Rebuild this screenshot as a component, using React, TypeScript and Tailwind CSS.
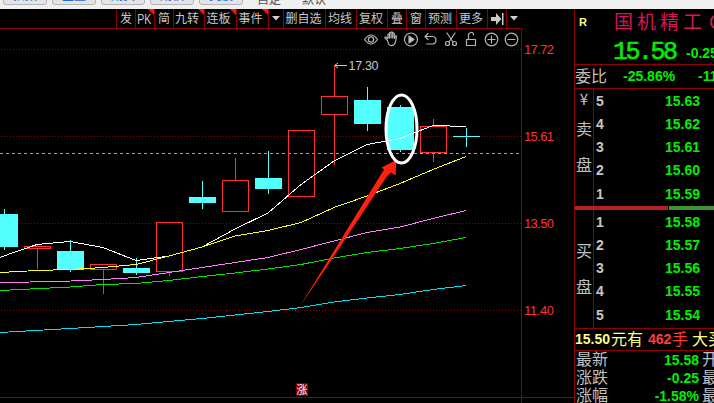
import React from 'react';

const CJK = "font-['Liberation_Sans','Noto_Sans_CJK_SC',sans-serif]";

const topTabs = ['指数', '主盘', '期货', '期权', '美股'];

type Cell = { label: string; w: string; flag?: boolean };
const cells: Cell[] = [
  { label: '发', w: 'w-[19px]' },
  { label: 'PK', w: 'w-[19px]', flag: true },
  { label: '简', w: 'w-[19px]' },
  { label: '九转', w: 'w-[31px]', flag: true },
  { label: '连板', w: 'w-[32px]', flag: true },
  { label: '事件', w: 'w-[32px]', flag: true },
  { label: 'v', w: 'w-[15px]' },
  { label: '删自选', w: 'w-[42px]' },
  { label: '均线', w: 'w-[31px]' },
  { label: '复权', w: 'w-[31px]' },
  { label: '叠', w: 'w-[19px]' },
  { label: '窗', w: 'w-[19px]' },
  { label: '预测', w: 'w-[31px]' },
  { label: '更多', w: 'w-[31px]' },
  { label: '>', w: 'w-[19px]' },
  { label: 'v', w: 'w-[15px]' },
];

function TopBar() {
  return (
    <div className="flex h-[9px] shrink-0 items-end overflow-hidden bg-[#f0f0f0] text-[12px]">
      <div className="flex items-end gap-[5px] pb-1 pl-[3px]">
        {topTabs.map((t) => (
          <div key={t} className="flex h-[24px] w-[44px] shrink-0 items-end justify-center rounded-[3px] border border-[#b4b4b4] bg-[#e4e4e6] leading-[16px] text-[#1f6fd0]">
            <span>{t}</span>
          </div>
        ))}
      </div>
      <div className="flex items-end gap-[21px] pb-px pl-[14px] leading-[16px] text-[#555]">
        <span>自定</span>
        <span>默认</span>
      </div>
    </div>
  );
}

function Toolbar() {
  return (
    <div className="flex h-[20px] w-[521px] justify-end border-b border-[#900000]">
      {cells.map((c, i) => (
        <div key={i} className={`relative flex shrink-0 items-center justify-center border-l border-[#900000] text-[12px] leading-none text-[#c8c8c8] ${c.w}`}>
          {c.label === 'v' ? (
            <svg width="8" height="5" viewBox="0 0 8 5"><path d="M0 0h8L4 4.5z" fill="#d0d0d0" /></svg>
          ) : c.label === '>' ? (
            <svg width="13" height="12" viewBox="0 0 13 12"><path d="M0 4h5V0l5.500 6L5 12V8H0zM11 0h1.500v12H11z" fill="#c8c8c8" /></svg>
          ) : (
            <span className={c.flag && c.label !== 'PK' ? 'whitespace-nowrap pr-1' : c.label.length > 1 ? 'whitespace-nowrap pr-0.5' : 'whitespace-nowrap'}>
              {c.label === 'PK' ? <span className="inline-block origin-center scale-x-75 text-[14px]">PK</span> : c.label}
            </span>
          )}
          {c.flag && (
            <svg className="absolute right-0 top-0" width="6" height="6" viewBox="0 0 6 6"><path d="M0 0h6v6z" fill="#ff1414" /></svg>
          )}
        </div>
      ))}
    </div>
  );
}

function DrawingTools() {
  return (
    <g fill="none" stroke="#b4b4b4" strokeWidth="1.2" strokeLinecap="round" strokeLinejoin="round">
      <path d="M364.500 39.500q6.500-9 13 0q-6.500 9-13 0z" />
      <circle cx="371" cy="39.500" r="2.600" />
      <path d="M387.500 40.500l-2.300-2.200q-.8-1.200.8-1.300l2 1.500v-4q.7-1.500 1.500 0v3.500v-5q.8-1.300 1.600 0v5v-5.500q.8-1.200 1.600 0v5.500v-4.500q.8-1.200 1.600 0v5l.7-2.300q1.400-1 1.500.5l-1 5q-.8 4-4.500 4q-2.500-.2-3.500-5.200z" />
      <circle cx="411" cy="39.500" r="6.500" />
      <path d="M409 36v7l5-3.500z" fill="#c8c8c8" />
      <path d="M428 33.500l-3 3l3 3M425.500 36.500h7q3.500.3 3.500 3.800t-3.500 3.700h-6" />
      <path d="M447 33l6 9M455 33l-6 9" />
      <circle cx="447.500" cy="43.500" r="2" /><circle cx="454.500" cy="43.500" r="2" />
      <path d="M466.500 39.500h9v6h-9zM468.500 39v-4q0-2 2.500-2.500t2.500 2.500" />
      <circle cx="491.500" cy="39.500" r="6.300" /><path d="M488 39.500h7M491.500 36v7" />
      <circle cx="511.500" cy="39.500" r="6.300" /><path d="M508 39.500h7" />
    </g>
  );
}

/* Candles: centre x, wick top, wick bottom, body top, body bottom, rising */
const candles: [number, number, number, number, number, boolean][] = [
  [4, 209, 250, 214, 247, false],
  [37, 245, 269, 246, 249, true],
  [70, 240, 272, 251, 270, false],
  [103, 264, 294, 264, 270, true],
  [136, 258, 275, 268, 273, false],
  [169, 222, 276, 222, 272, true],
  [202, 181, 209, 197, 203, false],
  [235, 158, 212, 180, 212, true],
  [268, 151, 194, 178, 189, false],
  [301, 130, 197, 130, 197, true],
  [334, 66, 165, 96, 115, true],
  [367, 87, 131, 100, 124, false],
  [400, 105, 152, 107, 150, false],
  [433, 119, 162, 126, 153, true],
];

const averages: [string, string][] = [
  ['#ffffff', '0,257.500 12,253 37,244.500 70,241.500 103,247.500 136,260.500 169,256 202,247 235,229 268,213 301,184.500 334,161 367,144.500 400,138.500 433,125.500 466,126.500'],
  ['#ffff20', '0,272.500 37,270.500 70,269.500 103,267.500 136,264.500 169,256 202,247 235,236 268,230.500 301,222.500 334,207.500 367,196 400,183.500 433,169.500 466,156.500'],
  ['#ff80ff', '0,282.500 60,281.500 103,279.500 136,277.500 169,272.500 202,267.500 235,262.500 268,257.500 301,249.500 334,241 367,232.500 400,227 433,218.500 466,210.500'],
  ['#00e600', '0,290.500 70,287 103,284.500 136,283.500 169,280.500 202,276.500 235,273 268,269 301,264.500 334,258 367,252.500 400,248.500 433,243.500 466,237.500'],
  ['#00e0f0', '0,332.500 70,328.500 136,324.500 169,321.500 202,318.500 235,315 268,311.500 301,307.500 334,302 367,298 400,294.500 433,289.500 466,285.500'],
];

function Chart() {
  return (
    <svg className="block shrink-0" width="574" height="374" viewBox="0 29 574 374">
      <g fontFamily="Liberation Sans, sans-serif" fontSize="13" fill="#ff3232">
        <text x="524" y="54" textLength="30">17.72</text>
        <text x="524" y="141" textLength="30">15.61</text>
        <text x="524" y="228" textLength="30">13.50</text>
        <text x="524" y="315" textLength="30">11.40</text>
      </g>
      <g stroke="#900000" shapeRendering="crispEdges">
        <path d="M1 49.500H521M1 136.500H521M1 223.500H521M1 310.500H521" strokeDasharray="1 2" />
        <path d="M521.500 29V403M0 397.500H574" />
      </g>
      <path d="M0 153.500H519" stroke="#ff8c32" strokeDasharray="3 3" shapeRendering="crispEdges" />
      <g shapeRendering="crispEdges">
        {candles.map(([x, t, b, o, c, up]) =>
          up ? (
            <path key={x} d={`M${x + 0.5} ${t}V${o}M${x + 0.5} ${c}V${b}M${x - 12.5} ${o + 0.5}H${x + 13.5}V${c - 0.5}H${x - 12.5}Z`} fill="none" stroke="#ff3232" />
          ) : (
            <g key={x} fill="#54ffff">
              <rect x={x} y={t} width="1" height={b - t} />
              <rect x={x - 13} y={o} width="27" height={c - o} />
            </g>
          ),
        )}
        <path d="M453 136.500H480M466.500 128V147" stroke="#54ffff" />
      </g>
      {averages.map(([color, pts]) => (
        <polyline key={color} points={pts} fill="none" stroke={color} shapeRendering="crispEdges" />
      ))}
      <path d="M335 65.500H347M338 63L334.500 65.500L338 68" stroke="#c8c8c8" fill="none" />
      <text x="348.500" y="69.500" fontSize="12.500" textLength="30" fill="#c8c8c8" fontFamily="Liberation Sans, sans-serif">17.30</text>
      <path d="M299.500 307L384 169.500L381.500 167.500L396.500 160L395.500 175.500L391 172.500L386.500 177L331 260.500Z" fill="#ff2010" />
      <ellipse cx="401.500" cy="129" rx="15.500" ry="34" fill="none" stroke="#fff" strokeWidth="3" />
      <rect x="296" y="383" width="12" height="13" fill="#800000" />
      <text x="296.500" y="393.800" fontSize="11" fill="#fff" fontFamily="Noto Sans CJK SC, sans-serif">涨</text>
      <DrawingTools />
    </svg>
  );
}

function Depth({ title, rows }: { title: string[]; rows: [string, string][] }) {
  const sell = title.length === 3;
  return (
    <div className={`flex shrink-0 ${sell ? 'h-[117px]' : 'h-[118px]'}`}>
      <div className={`flex w-[19px] shrink-0 flex-col items-center border-r border-[#900000] text-[16px] leading-[16px] text-[#c0c0c0] ${sell ? 'pt-0.5' : 'pt-[34px]'}`}>
        {title.map((t, i) => (
          <span key={i} className={i === 0 ? (sell ? "font-['Noto_Sans_CJK_SC'] text-[15px]" : '') : i === 1 && sell ? 'mt-[15px]' : 'mt-[20px]'}>{t}</span>
        ))}
      </div>
      <div className="flex flex-1 flex-col">
        {rows.map(([n, p]) => (
          <div key={n} className="flex h-[23.250px] items-center justify-between pl-[2px] pr-[14px] text-[14px] font-bold leading-none">
            <span className="text-[#c8c8c8]">{n}</span>
            <span className="whitespace-nowrap text-right text-[#00f000]">{p}</span>
          </div>
        ))}
      </div>
    </div>
  );
}

function Quote() {
  return (
    <div className="flex w-[140px] shrink-0 flex-col overflow-hidden border-l border-[#900000]">
      <div className="flex h-[26px] shrink-0 whitespace-nowrap pl-1">
        <span className="mt-[7px] w-[35px] shrink-0 text-[11px] font-bold leading-[13px] text-[#ffff80]">R</span>
        <span className="mt-[1px] shrink-0 font-['Noto_Sans_CJK_SC',sans-serif] text-[19px] leading-[22px] tracking-[4px] text-[#d8145a]">国机精工</span>
        <span className="mt-[2px] shrink-0 pl-[3px] text-[20px] leading-[22px] text-[#d8145a]">C</span>
      </div>
      <div className="flex h-[30px] shrink-0 items-center whitespace-nowrap border-b border-[#900000] pl-[38px] text-[#00f000]">
        <span className="w-[73px] shrink-0 pt-[5px] font-['Liberation_Mono',monospace] text-[25px] leading-none tracking-[-2.500px] [-webkit-text-stroke:0.500px_#00f000]">15.58</span>
        <span className="shrink-0 pt-[7px] text-[14px] font-bold">-0.25</span>
      </div>
      <div className="flex h-[24px] shrink-0 items-center whitespace-nowrap border-b border-[#900000] text-[14px] font-bold text-[#00f000]">
        <span className="w-[48px] shrink-0 text-[16px] font-normal text-[#c0c0c0]">委比</span>
        <span className="w-[75px] shrink-0">-25.86%</span>
        <span className="shrink-0">-117</span>
      </div>
      <Depth title={['¥', '卖', '盘']} rows={[['5', '15.63'], ['4', '15.62'], ['3', '15.61'], ['2', '15.60'], ['1', '15.59']]} />
      <div className="flex h-1 shrink-0 gap-px">
        <div className="w-[93px] bg-[#b42020]" />
        <div className="flex-1 bg-[#3c9632]" />
      </div>
      <Depth title={['买', '盘']} rows={[['1', '15.58'], ['2', '15.57'], ['3', '15.56'], ['4', '15.55'], ['5', '15.54']]} />
      <div className="flex h-[23px] shrink-0 items-center whitespace-nowrap border-y border-[#900000] text-[14px] text-[#ffff80]">
        <span className="w-[36px] shrink-0 font-bold">15.50</span>
        <span className="w-[37px] shrink-0 text-[16px]">元有</span>
        <span className="w-[24px] shrink-0 font-bold text-[#ff3c3c]">462</span>
        <span className="w-[20px] shrink-0 text-[16px] text-[#ff3c3c]">手</span>
        <span className="shrink-0 text-[16px]">大买</span>
      </div>
      {[['最新', '15.58', '开'], ['涨跌', '-0.25', '最'], ['涨幅', '-1.58%', '最']].map(([a, b, c]) => (
        <div key={a} className="flex h-[18px] shrink-0 items-center whitespace-nowrap pl-[1px] text-[16px] leading-none text-[#c0c0c0]">
          <span className="w-[32px] shrink-0">{a}</span>
          <span className="w-[91px] shrink-0 text-right text-[14px] font-bold text-[#00f000]">{b}</span>
          <span className="shrink-0 pl-[3px]">{c}</span>
        </div>
      ))}
    </div>
  );
}

export default function App() {
  return (
    <div className={`flex h-[403px] w-[714px] flex-col overflow-hidden bg-black ${CJK}`}>
      <TopBar />
      <div className="flex min-h-0 flex-1">
        <div className="flex w-[574px] shrink-0 flex-col">
          <Toolbar />
          <Chart />
        </div>
        <Quote />
      </div>
    </div>
  );
}
